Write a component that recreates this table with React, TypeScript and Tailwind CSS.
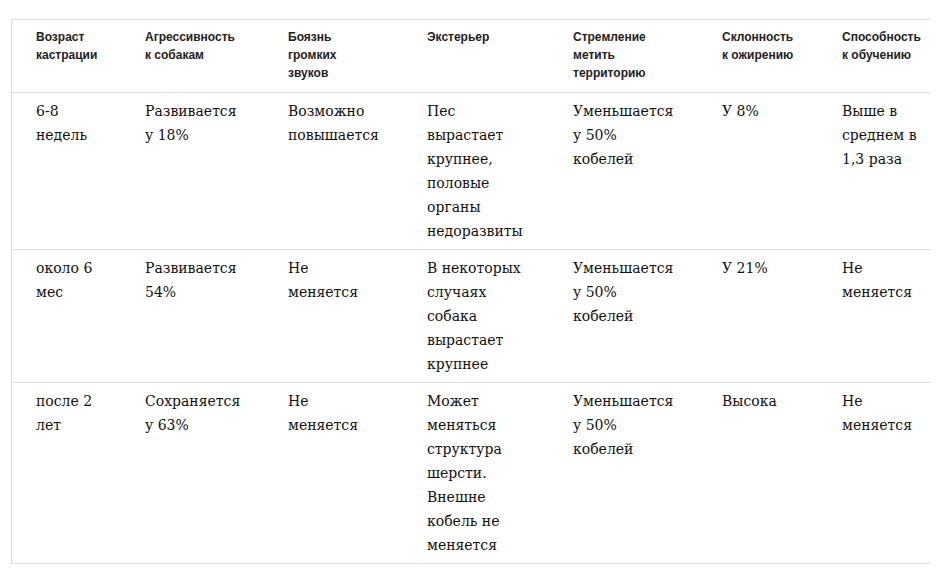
const headers = [
  ["Возраст", "кастрации"],
  ["Агрессивность", "к собакам"],
  ["Боязнь", "громких", "звуков"],
  ["Экстерьер"],
  ["Стремление", "метить", "территорию"],
  ["Склонность", "к ожирению"],
  ["Способность", "к обучению"],
];

const rows: string[][][] = [
  [
    ["6-8", "недель"],
    ["Развивается", "у 18%"],
    ["Возможно", "повышается"],
    ["Пес", "вырастает", "крупнее,", "половые", "органы", "недоразвиты"],
    ["Уменьшается", "у 50%", "кобелей"],
    ["У 8%"],
    ["Выше в", "среднем в", "1,3 раза"],
  ],
  [
    ["около 6", "мес"],
    ["Развивается", "54%"],
    ["Не", "меняется"],
    ["В некоторых", "случаях", "собака", "вырастает", "крупнее"],
    ["Уменьшается", "у 50%", "кобелей"],
    ["У 21%"],
    ["Не", "меняется"],
  ],
  [
    ["после 2", "лет"],
    ["Сохраняется", "у 63%"],
    ["Не", "меняется"],
    ["Может", "меняться", "структура", "шерсти.", "Внешне", "кобель не", "меняется"],
    ["Уменьшается", "у 50%", "кобелей"],
    ["Высока"],
    ["Не", "меняется"],
  ],
];

// column widths measured from the text starts
const widths = ["w-[109px]", "w-[143px]", "w-[139px]", "w-[146px]", "w-[149px]", "w-[120px]", "w-[89px]"];

function Lines({ lines }: { lines: string[] }) {
  return (
    <>
      {lines.map((l, i) => (
        <span key={i} className="block whitespace-nowrap">
          {l}
        </span>
      ))}
    </>
  );
}

export default function App() {
  return (
    <div className="min-h-screen bg-white pt-[19px] pl-[11px]">
      <div className="w-[920px] border-t border-l border-[#dedede]">
        <div className="flex border-b border-[#dedede] pl-[24px] pt-[8px] pb-[10px] font-['Liberation_Sans',Arial,sans-serif] text-[12px] leading-[18px] font-bold text-[#222]">
          {headers.map((h, i) => (
            <div key={i} className={widths[i]}>
              <Lines lines={h} />
            </div>
          ))}
        </div>
        {rows.map((r, ri) => (
          <div
            key={ri}
            className="flex border-b border-[#dedede] pl-[24px] py-[6px] font-['DejaVu_Serif',Georgia,serif] text-[14px] leading-[24px] text-[#111]"
          >
            {r.map((c, ci) => (
              <div key={ci} className={widths[ci]}>
                <Lines lines={c} />
              </div>
            ))}
          </div>
        ))}
      </div>
    </div>
  );
}
